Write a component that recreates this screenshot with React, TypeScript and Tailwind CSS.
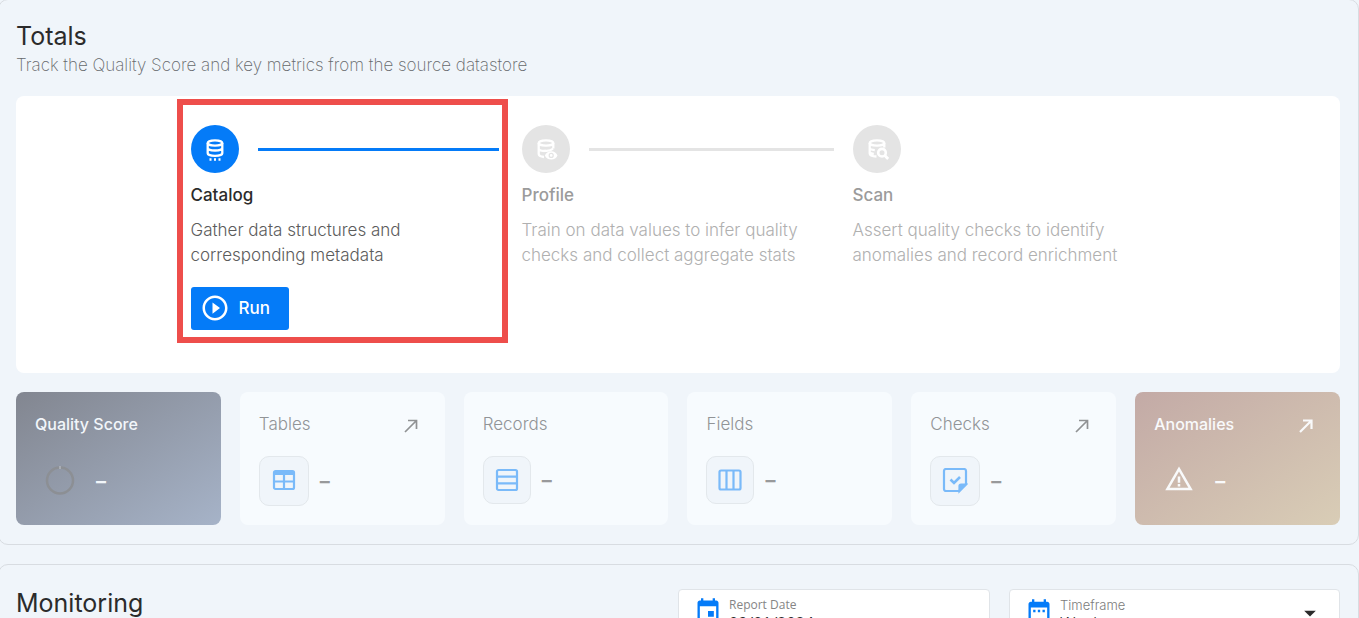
import type { ReactNode } from "react";
import {
  MdArrowDropDown,
  MdDateRange,
  MdEvent,
  MdPlayCircleOutline,
  MdWarningAmber,
} from "react-icons/md";

interface Step {
  title: string;
  lines: [string, string];
  icon: ReactNode;
  active?: boolean;
}

interface Metric {
  label: string;
  icon: ReactNode;
  link?: boolean;
  boxClass: string;
}

function CatalogIcon() {
  return (
    <svg width="24" height="24" viewBox="0 0 24 24" fill="none" stroke="currentColor" strokeWidth="2.3">
      <ellipse cx="12" cy="6" rx="7.3" ry="2.7" />
      <path d="M4.7 6v10.3c0 1.5 3.2 2.6 7.3 2.6s7.3-1.1 7.3-2.6V6M4.7 11c0 1.5 3.2 2.5 7.3 2.5s7.3-1 7.3-2.5" />
      <path d="M6.5 22.5h2M11 22.5h2M15.5 22.5h2" />
    </svg>
  );
}

function ProfileIcon() {
  return (
    <svg width="24" height="24" viewBox="0 0 24 24" fill="none" stroke="currentColor" strokeWidth="2.3">
      <ellipse cx="12" cy="6" rx="7.3" ry="2.7" />
      <path d="M4.7 6v11c0 1.6 2 2.6 5.3 3M4.7 11.5c0 1.5 2.4 2.4 5.8 2.5M19.3 6v5.5M10.5 13.7c3.6.3 7-.6 8.4-2" />
      <path
        fill="currentColor"
        stroke="none"
        fillRule="evenodd"
        d="M17.2 14.3c3 0 5.3 1.7 6.3 4.1-1 2.4-3.3 4.1-6.3 4.1s-5.3-1.7-6.3-4.1c1-2.4 3.3-4.1 6.3-4.1Zm0 1.5a2.6 2.6 0 1 0 0 5.2 2.6 2.6 0 0 0 0-5.2Zm0 1.2a1.4 1.4 0 1 1 0 2.8 1.4 1.4 0 0 1 0-2.8Z"
      />
    </svg>
  );
}

function ScanIcon() {
  return (
    <svg width="24" height="24" viewBox="0 0 24 24" fill="none" stroke="currentColor" strokeWidth="2.3">
      <ellipse cx="12" cy="6" rx="7.3" ry="2.7" />
      <path d="M4.7 6v10.5c0 1.8 2.8 2.9 6.8 3M4.7 10.8c0 1.3 2 2.1 5.1 2.4M4.7 14.8c0 1.2 1.5 1.8 4.1 2.1M19.3 6v4.5" />
      <circle cx="17" cy="15.7" r="3.8" strokeWidth="2.6" />
      <path d="m19.8 18.5 3.4 3.4" strokeWidth="2.8" />
    </svg>
  );
}

function TableIcon() {
  return (
    <svg width="24" height="24" viewBox="0 0 24 24" fill="none" stroke="currentColor" strokeWidth="2.2">
      <rect x="2" y="2" width="20" height="18" rx="1.5" />
      <path d="M2 12.5h20M12 5v15" />
      <path d="M2 4h20" strokeWidth="4" />
    </svg>
  );
}

function RowsIcon() {
  return (
    <svg width="24" height="24" viewBox="0 0 24 24" fill="none" stroke="currentColor" strokeWidth="2.2">
      <rect x="2" y="2" width="20" height="20" rx="1.5" />
      <path d="M2 8.7h20M2 15.3h20" />
    </svg>
  );
}

function ColumnsIcon() {
  return (
    <svg width="24" height="24" viewBox="0 0 24 24" fill="none" stroke="currentColor" strokeWidth="2.2">
      <rect x="1.5" y="2.5" width="21" height="19" rx="1.5" />
      <path d="M8.5 2.5v19M15.5 2.5v19" />
    </svg>
  );
}

function NoteCheckIcon() {
  return (
    <svg width="26" height="26" viewBox="0 0 26 26" fill="none" stroke="currentColor" strokeWidth="2.2">
      <path d="M17 23H4a2 2 0 0 1-2-2V3a2 2 0 0 1 2-2h18a2 2 0 0 1 2 2v13Z" />
      <path d="M17.5 23v-5a1.5 1.5 0 0 1 1.5-1.5h5Z" fill="currentColor" />
      <path d="m8.5 11.5 3.5 3.5 6-6" strokeWidth="2.6" />
    </svg>
  );
}

function ArrowUpRight({ className }: { className: string }) {
  return (
    <svg className={className} width="14" height="14" viewBox="0 0 14 14" fill="none" stroke="currentColor">
      <path d="M1 13 12.5 1.5M4 1.5h8.5V10" />
    </svg>
  );
}

const steps: Step[] = [
  {
    title: "Catalog",
    lines: ["Gather data structures and", "corresponding metadata"],
    icon: <CatalogIcon />,
    active: true,
  },
  {
    title: "Profile",
    lines: ["Train on data values to infer quality", "checks and collect aggregate stats"],
    icon: <ProfileIcon />,
  },
  {
    title: "Scan",
    lines: ["Assert quality checks to identify", "anomalies and record enrichment"],
    icon: <ScanIcon />,
  },
];

const metrics: Metric[] = [
  { label: "Tables", icon: <TableIcon />, link: true, boxClass: "size-[50px]" },
  { label: "Records", icon: <RowsIcon />, boxClass: "size-12" },
  { label: "Fields", icon: <ColumnsIcon />, boxClass: "size-12" },
  { label: "Checks", icon: <NoteCheckIcon />, link: true, boxClass: "size-[50px]" },
];

function StepColumn({ step, last }: { step: Step; last: boolean }) {
  const { active } = step;
  return (
    <div className="relative min-w-0 pl-[9px] pr-[10px] pt-[29px]">
      <div className="flex items-center gap-[19px]">
        <div
          className={`flex size-12 shrink-0 items-center justify-center rounded-full text-white ${
            active ? "bg-[#047bf8]" : "bg-[#e4e4e4]"
          }`}
        >
          {step.icon}
        </div>
        {!last && (
          <div className={`h-[3px] flex-1 ${active ? "bg-[#047bf8]" : "bg-[#e4e4e4]"}`} />
        )}
      </div>
      <h3
        className={`mt-2.5 text-[17px] leading-6 font-medium ${
          active ? "text-[#2b2b2b]" : "text-[#9b9b9b]"
        }`}
      >
        {step.title}
      </h3>
      <p
        className={`mt-[11px] text-[17px] leading-[25px] font-light whitespace-nowrap ${
          active ? "text-[#5c5c5c]" : "text-[#b0b0b0]"
        }`}
      >
        {step.lines[0]}
        <br />
        {step.lines[1]}
      </p>
      {active && (
        <>
          <button className="mt-[19px] flex h-[43px] items-center gap-[9px] rounded-[3px] bg-[#047bf8] pr-[19px] pl-[9px] text-[17px] font-medium text-white">
            <MdPlayCircleOutline size={30} className="mb-0.5" />
            Run
          </button>
          <div className="pointer-events-none absolute top-[3px] right-[5px] bottom-[30px] -left-[5px] border-[6px] border-[#ee4e4b] shadow-[inset_0_0_0_3px_#fff]" />
        </>
      )}
    </div>
  );
}

function MetricCard({ metric }: { metric: Metric }) {
  return (
    <div className="h-[133px] rounded-lg bg-[#f7fbfe] px-[19px] pt-5">
      <div className="flex items-center justify-between pr-2">
        <h3 className="text-[17px] leading-6 font-light text-[#919497]">{metric.label}</h3>
        {metric.link && (
          <a href="#" aria-label={`Open ${metric.label}`} className="pt-1">
            <ArrowUpRight className="text-[#909294] [stroke-width:1.7]" />
          </a>
        )}
      </div>
      <div className="mt-5 flex items-center gap-[11px]">
        <div
          className={`flex items-center justify-center rounded-[10px] border border-[#e3e8ec] bg-[#f0f5fa] text-[#7abaf9] ${metric.boxClass}`}
        >
          {metric.icon}
        </div>
        <span className="text-xl font-bold text-[#98999b]">–</span>
      </div>
    </div>
  );
}

export default function App() {
  return (
    <main className="h-screen overflow-hidden bg-[#f0f5fa] font-[Inter,sans-serif] text-[#2b2b2b]">
      <section className="-mt-px -ml-0.5 rounded-[10px] border border-[#d8dce1] pt-[22px] pr-[18px] pb-[19px] pl-[17px]">
        <h2 className="text-[25px] leading-7">Totals</h2>
        <p className="mt-[3px] text-[17px] leading-6 font-extralight text-[#66696c]">
          Track the Quality Score and key metrics from the source datastore
        </p>

        <div className="mt-[19px] flex h-[277px] justify-center rounded-lg bg-white">
          <div className="grid w-3/4 grid-cols-3">
            {steps.map((step, i) => (
              <StepColumn key={step.title} step={step} last={i === steps.length - 1} />
            ))}
          </div>
        </div>

        <div className="mt-[19px] grid grid-cols-6 gap-[19px]">
          <div className="h-[133px] rounded-lg bg-linear-to-br from-[#828690] to-[#a6b3c8] px-[19px] pt-5 text-[#f2f6fa]">
            <h3 className="text-base leading-6 font-medium">Quality Score</h3>
            <div className="mt-5 flex h-[50px] items-center gap-[21px] pl-2.5">
              <svg width="30" height="30" viewBox="0 0 30 30" fill="none">
                <circle cx="15" cy="14.5" r="13" stroke="#8c8f94" strokeWidth="2.5" />
                <path d="M15 0v3" stroke="#c5cad2" />
              </svg>
              <span className="text-xl font-bold">–</span>
            </div>
          </div>
          {metrics.map((metric) => (
            <MetricCard key={metric.label} metric={metric} />
          ))}
          <div className="h-[133px] rounded-lg bg-linear-to-br from-[#c3aaa6] to-[#d9cdb6] px-[19px] pt-5 text-[#f9fafb]">
            <div className="flex items-center justify-between pr-2">
              <h3 className="text-base leading-6 font-medium">Anomalies</h3>
              <a href="#" aria-label="Open Anomalies" className="pt-1">
                <ArrowUpRight className="[stroke-width:2.2]" />
              </a>
            </div>
            <div className="mt-5 flex h-[50px] items-center gap-[21px] pl-2.5">
              <MdWarningAmber size={30} className="mb-1" />
              <span className="text-xl font-bold">–</span>
            </div>
          </div>
        </div>
      </section>

      <section className="mt-[19px] -ml-0.5 rounded-[10px] border border-[#d8dce1] pt-6 pr-[18px] pb-6 pl-[17px]">
        <div className="flex items-start">
          <h2 className="w-1/2 text-[25px] leading-7">Monitoring</h2>
          <div className="grid w-1/2 grid-cols-[312fr_331fr] gap-[19px]">
            <div className="flex h-12 items-start gap-[7px] rounded-[4px] border border-[#e0e4e8] bg-white pt-[7px] pl-[15px] font-['Open_Sans',sans-serif]">
              <MdEvent size={28} className="shrink-0 text-[#047bf8]" />
              <div className="min-w-0 flex-1">
                <label htmlFor="report-date" className="block text-xs leading-4 text-[#858585]">
                  Report Date
                </label>
                <input
                  id="report-date"
                  type="text"
                  defaultValue="09/01/2024"
                  className="block h-5 w-full text-base leading-5 text-[#2b2b2b] outline-none"
                />
              </div>
            </div>
            <div className="flex h-12 items-start gap-[7px] rounded-[4px] border border-[#e0e4e8] bg-white pt-[7px] pr-[15px] pl-[15px]">
              <MdDateRange size={28} className="shrink-0 text-[#047bf8]" />
              <div className="min-w-0 flex-1">
                <label htmlFor="timeframe" className="block text-[13px] leading-4 font-light text-[#7c7c7c]">
                  Timeframe
                </label>
                <select
                  id="timeframe"
                  defaultValue="Week"
                  className="block h-5 w-full appearance-none text-base leading-5 font-light text-[#2b2b2b] outline-none"
                >
                  <option>Day</option>
                  <option>Week</option>
                  <option>Month</option>
                </select>
              </div>
              <MdArrowDropDown size={28} className="mt-0.5 shrink-0 text-[#2b2b2b]" />
            </div>
          </div>
        </div>
      </section>
    </main>
  );
}
